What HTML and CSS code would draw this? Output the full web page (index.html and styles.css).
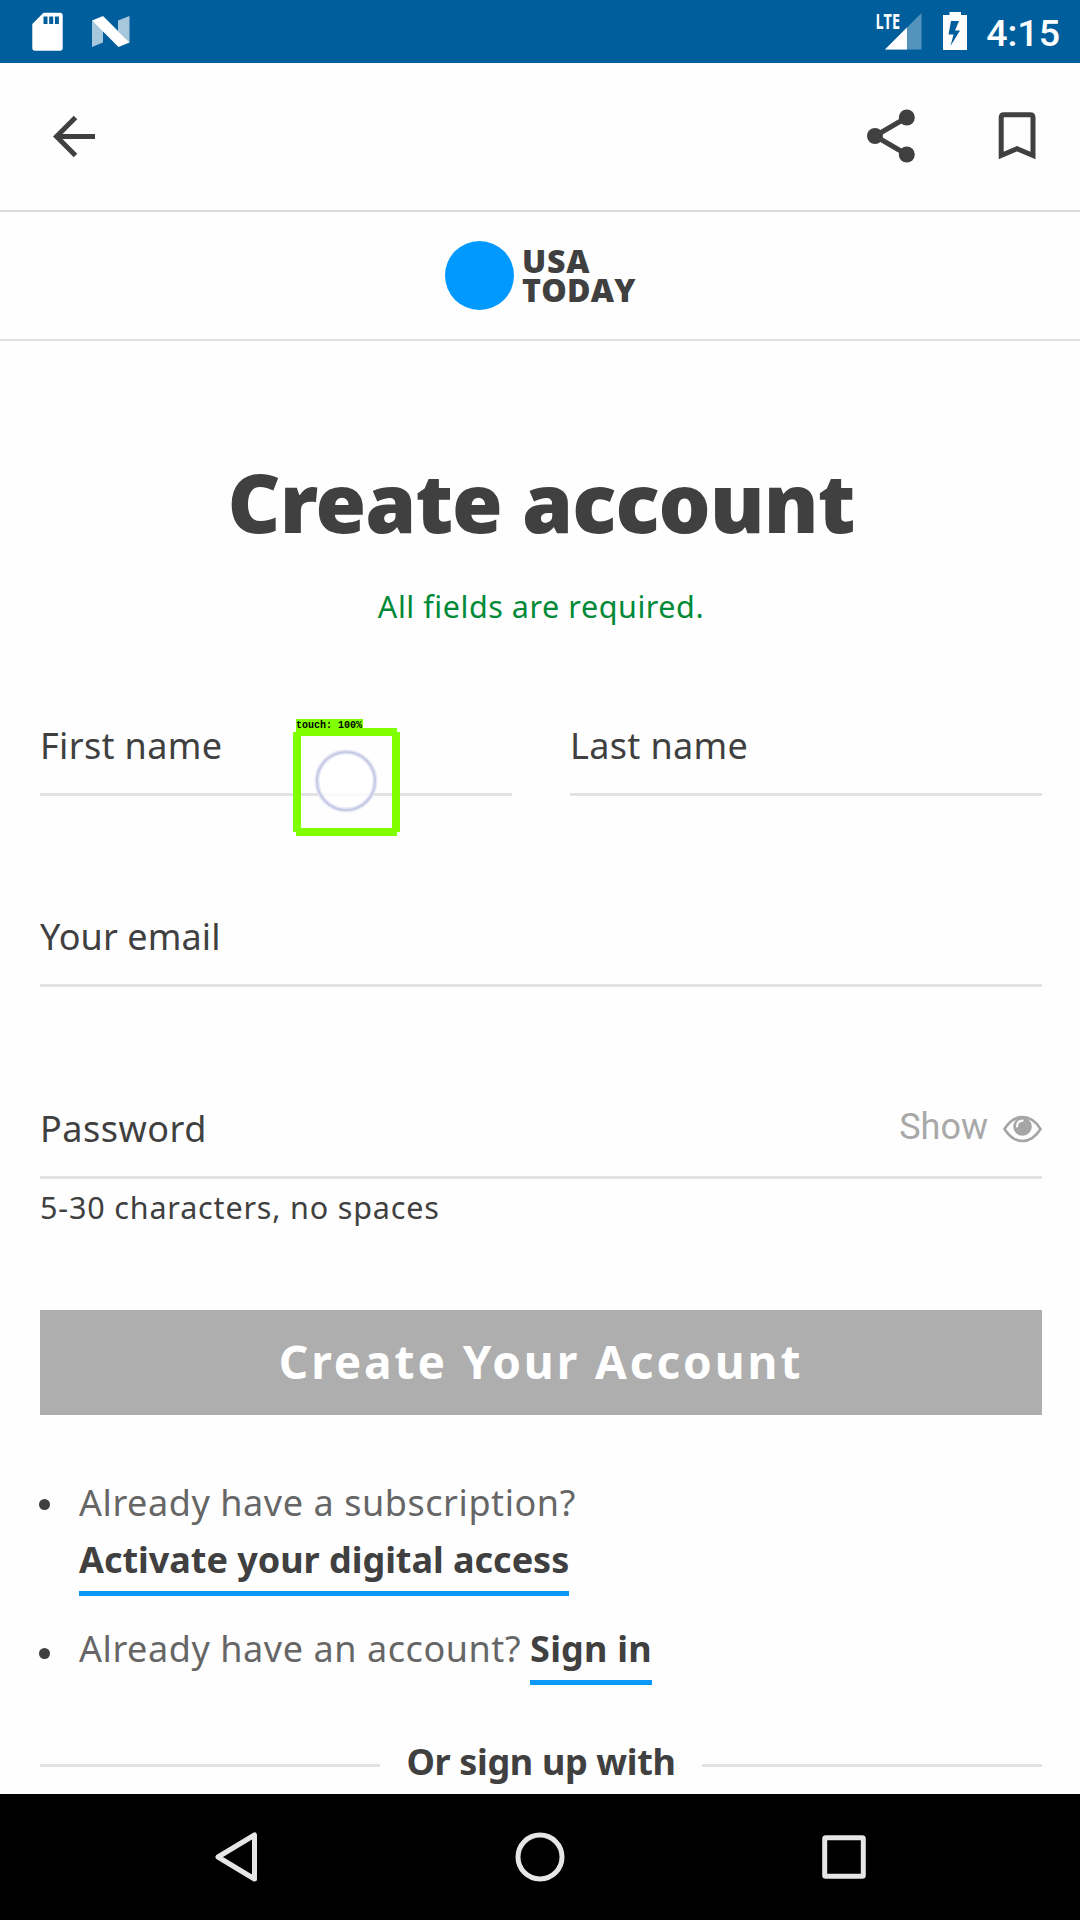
FILE: index.html
```html
<!DOCTYPE html>
<html lang="en">
<head>
<meta charset="utf-8">
<title>Create account</title>
<link rel="stylesheet" href="styles.css">
</head>
<body>
<div class="screen">
  <div class="status">
    <svg class="status-left" width="160" height="63" viewBox="0 0 160 63">
      <path fill="#fff" fill-rule="evenodd" d="M43.500 12.700H60q2.700 0 2.700 2.700V48q0 2.700-2.700 2.700H35q-2.700 0-2.700-2.700V24zM43.500 16.500V24h4V16.500zM49.200 16.500V24h4V16.500zM54.900 16.500V24h4V16.500z"/>
      <path fill="#fff" fill-opacity=".65" d="M92 20.500L103 30V42.500L92 47zM118 20.500L129.500 16V43L118 31z"/>
      <path fill="#fff" d="M92 20.500L103 16L129.500 42.500L118.500 47z"/>
    </svg>
    <div class="status-right">
      <svg width="100" height="63" viewBox="870 0 100 63">
        <path fill="#fff" fill-opacity=".33" d="M885 49.500L921.500 13V49.500z"/>
        <path fill="#fff" d="M885 49.500L907 27.500V49.500z"/>
        <text class="lte" x="875.500" y="29" textLength="24.500" lengthAdjust="spacingAndGlyphs">LTE</text>
        <path fill="#fff" fill-rule="evenodd" d="M949.500 12H961V15H967V50H943V15H949.500zM951 21L948.500 34.500H953.500L950.500 46L960 30.500H955L959 21z"/>
      </svg>
      <span class="time">4:15</span>
    </div>
  </div>

  <div class="toolbar">
    <svg width="42" height="42" viewBox="53 115 42 42"><path d="M95 136.500H58M75.500 117.500L56.500 136.500L75.500 155.500" fill="none" stroke="#404040" stroke-width="5"/></svg>
    <div class="actions">
      <svg width="48" height="54" viewBox="867 109 48 54"><g fill="#404040"><circle cx="906.800" cy="117.500" r="8"/><circle cx="875" cy="136" r="8"/><circle cx="906.800" cy="154.500" r="8"/></g><path d="M906.800 117.500L875 136L906.800 154.500" fill="none" stroke="#404040" stroke-width="5"/></svg>
      <svg width="38" height="48" viewBox="998 112 38 48"><path d="M1001.200 155.500V117.500Q1001.200 114.800 1004 114.800H1030Q1033 114.800 1033 117.500V155.500L1017 148.700z" fill="none" stroke="#404040" stroke-width="5"/></svg>
    </div>
  </div>

  <div class="brand">
    <span class="brand-dot"></span>
    <div class="brand-name"><span class="usa">USA</span><span class="today">TODAY</span></div>
  </div>

  <main class="form">
    <h1>Create account</h1>
    <p class="note">All fields are required.</p>
    <div class="names">
      <label class="field">First name</label>
      <label class="field">Last name</label>
    </div>
    <label class="field email">Your email</label>
    <div class="field password">
      <label>Password</label>
      <span class="show">Show
        <svg width="39" height="28" viewBox="0 0 39 28"><path d="M1.500 14Q9 2 19.500 2T37.500 14Q30 26 19.500 26T1.500 14z" fill="none" stroke="#a5a5a5" stroke-width="2.600"/><circle cx="19.500" cy="11.500" r="9.300" fill="#a5a5a5"/><path d="M14 11.500Q14 6 19.500 5.700" fill="none" stroke="#fdfdfd" stroke-width="2.200" stroke-linecap="round"/></svg>
      </span>
    </div>
    <p class="hint">5-30 characters, no spaces</p>
    <button class="submit">Create Your Account</button>
    <ul class="links">
      <li><span class="dot"></span><div class="stack"><span class="ask">Already have a subscription?</span><a class="activate">Activate your digital access</a></div></li>
      <li><span class="dot low"></span><span class="ask">Already have an account?</span><a class="signin">Sign in</a></li>
    </ul>
    <div class="divider"><span>Or sign up with</span></div>
  </main>

  <nav class="nav">
    <svg width="1080" height="126" viewBox="0 1794 1080 126" fill="none" stroke="#e6e6e6" stroke-width="5" stroke-linejoin="round">
      <path d="M254.500 1835V1879L218 1857z"/>
      <circle cx="540" cy="1857" r="22"/>
      <rect x="824.700" y="1837.700" width="38.600" height="38.600" rx="1"/>
    </svg>
  </nav>

  <div class="touch">
    <span class="touch-label">touch: 100%</span>
    <svg width="107" height="108" viewBox="293 728 107 108">
      <circle cx="346" cy="781" r="29" fill="#fff" fill-opacity=".8" stroke="#e6e8f6" stroke-width="5"/>
      <circle cx="346" cy="781" r="29" fill="none" stroke="#c6c9e4" stroke-width="2"/>
      <path d="M296 732H397M296 832H397M297 732V832M396 732V832" fill="none" stroke="#80ff00" stroke-width="8"/>
    </svg>
  </div>
</div>
</body>
</html>
```
FILE: styles.css
```css
* { box-sizing: border-box; }

body {
  margin: 0;
  background: #fefefe;
  color: #404040;
  font-family: "Noto Sans", sans-serif;
}

.screen {
  position: relative;
  width: 1080px;
  height: 1920px;
  overflow: hidden;
  display: flex;
  flex-direction: column;
}

svg { display: block; }

.status {
  height: 63px;
  flex: none;
  display: flex;
  justify-content: space-between;
  background: #005e9c;
  color: #fff;
}
.status-right { display: flex; gap: 16px; padding-right: 20px; }
.time { font: 500 37.500px/66px Roboto, sans-serif; }
.lte { font: 700 21.500px "Open Sans", sans-serif; fill: #fff; }

.toolbar {
  height: 149px;
  flex: none;
  display: flex;
  align-items: center;
  justify-content: space-between;
  padding: 0 44px 2px 53px;
  border-bottom: 2px solid #dcdcdc;
}
.actions { display: flex; align-items: center; gap: 83px; }

.brand {
  height: 129px;
  flex: none;
  display: flex;
  align-items: center;
  padding: 0 0 1px 445px;
  gap: 8px;
  border-bottom: 2px solid #e0e0e0;
}
.brand-dot { width: 69px; height: 69px; border-radius: 50%; background: #0099ff; }
.brand-name {
  display: flex;
  flex-direction: column;
  font: 800 32px/29px "Open Sans", sans-serif;
}
.usa { letter-spacing: 0.8px; }
.today { letter-spacing: 0.3px; }

.form {
  height: 1453px;
  flex: none;
  overflow: hidden;
  padding: 110px 38px 0 40px;
  display: flex;
  flex-direction: column;
}

h1 {
  margin: 0;
  text-align: center;
  font-size: 82px;
  font-weight: 900;
  line-height: 100px;
  letter-spacing: -1px;
}
.note {
  margin: 35px 0 96px;
  text-align: center;
  color: #008a38;
  font-size: 30.500px;
  line-height: 40px;
  letter-spacing: 0.560px;
}

.names { display: flex; gap: 58px; }
.names .field { flex: 1; }
.field {
  display: block;
  padding-bottom: 23px;
  border-bottom: 3px solid #e2e2e2;
  font-size: 36px;
  line-height: 48px;
  letter-spacing: 0.350px;
}
.email { margin-top: 117px; letter-spacing: 0.100px; }
.password { margin-top: 118px; display: flex; justify-content: space-between; letter-spacing: 0.500px; }
.show {
  display: flex;
  align-items: center;
  gap: 15px;
  height: 43px;
  color: #a8a8a8;
  font-family: Roboto, sans-serif;
  letter-spacing: 0;
}
.show svg { position: relative; top: 2px; }
.hint {
  margin: 8px 0 83px;
  font-size: 30.500px;
  line-height: 40px;
  letter-spacing: 0.830px;
}

.submit {
  height: 105px;
  flex: none;
  border: 0;
  padding: 0 0 3px;
  background: #aeaeae;
  color: #fff;
  font: 700 46px "Noto Sans", sans-serif;
  letter-spacing: 2.920px;
}

.links {
  list-style: none;
  margin: 59px 0 0;
  padding: 0;
  display: flex;
  flex-direction: column;
  gap: 24px;
  font-size: 36px;
  line-height: 57px;
}
.links li { display: flex; align-items: flex-start; }
.dot {
  width: 11px;
  height: 11px;
  margin: 25px 29px 0 -1px;
  border-radius: 50%;
  background: #404040;
}
.dot.low { margin-top: 28px; }
.stack { display: flex; flex-direction: column; align-items: flex-start; }
.ask { color: #666; letter-spacing: 0.560px; }
.links a {
  padding-bottom: 3px;
  border-bottom: 5px solid #0b99f8;
  font-weight: 700;
}
.activate { letter-spacing: -0.030px; }
.signin { margin-left: 9px; letter-spacing: 0.200px; }

.divider {
  margin-top: 53px;
  display: flex;
  align-items: center;
  gap: 26px;
  font-size: 36px;
  font-weight: 700;
  line-height: 48px;
  letter-spacing: -0.350px;
}
.divider::before, .divider::after {
  content: "";
  flex: 1;
  height: 3px;
  margin-top: 6px;
  background: #e2e2e2;
}

.nav { height: 126px; flex: none; background: #000; }

.touch { position: absolute; left: 293px; top: 719px; width: 107px; }
.touch svg { margin-top: -3px; }
.touch-label {
  display: block;
  width: 67px;
  height: 12px;
  margin-left: 3px;
  background: #80ff00;
  color: #000;
  font: 700 10px/14px "Liberation Mono", monospace;
  white-space: nowrap;
}
```
